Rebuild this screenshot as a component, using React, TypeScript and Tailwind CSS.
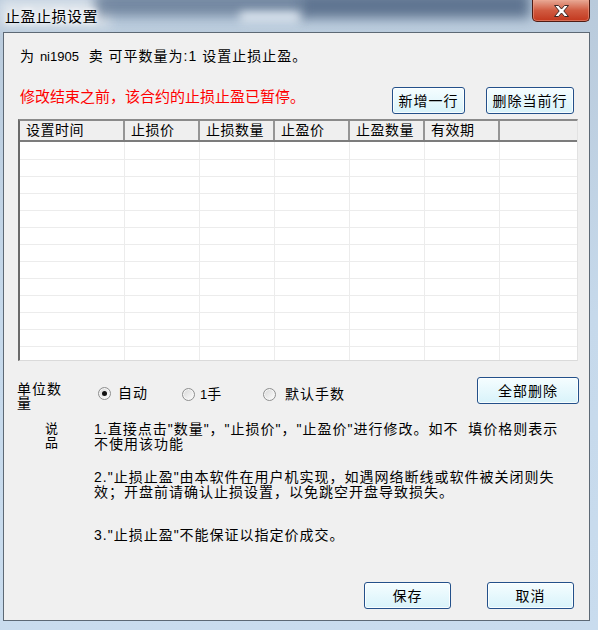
import React from "react";

const cols = [
  { label: "设置时间", w: "w-[105px]", sep: true },
  { label: "止损价", w: "w-[75px]", sep: true },
  { label: "止损数量", w: "w-[75px]", sep: true },
  { label: "止盈价", w: "w-[75px]", sep: true },
  { label: "止盈数量", w: "w-[75px]", sep: true },
  { label: "有效期", w: "w-[75px]", sep: true },
  { label: "", w: "w-[77px]", sep: false },
];

const rows = Array.from({ length: 13 }, (_, i) => i);

function Btn({ label, className = "" }: { label: string; className?: string }) {
  return (
    <button
      className={
        "h-[27px] border border-[#23508a] rounded-[3px] bg-linear-to-b from-[#f5fdff] to-[#d8f3fa] shadow-[inset_0_0_0_1px_#ffffffcc] text-[14px] tracking-[1px] text-black leading-none " +
        className
      }
    >
      {label}
    </button>
  );
}

function Radio({ checked = false }: { checked?: boolean }) {
  return (
    <span className="w-[13px] h-[13px] shrink-0 rounded-full border border-[#8e8f8f] bg-linear-to-br from-[#d6d6d6] to-white shadow-[inset_0_0_0_1px_#f6f6f6] flex items-center justify-center">
      {checked && <span className="w-[5px] h-[5px] rounded-full bg-[#111]" />}
    </span>
  );
}

export default function App() {
  return (
    <div className="relative w-[598px] h-[630px] overflow-hidden bg-linear-to-b from-[#b9cadb] via-[#c6d9eb] to-[#c9dcee] font-['Liberation_Sans','Noto_Sans_CJK_SC',sans-serif] text-black flex flex-col">
      {/* glass blur of the desktop behind the title bar */}
      <div className="absolute left-0 top-0 w-[110px] h-[26px] bg-[#e3e9ef] blur-[6px] opacity-90" />
      <div className="absolute left-[95px] top-[-8px] w-[210px] h-[24px] bg-[#687d98] blur-[6px] opacity-85" />
      <div className="absolute left-[300px] top-[-8px] w-[230px] h-[26px] bg-[#566c89] blur-[6px] opacity-90" />
      <div className="absolute left-[240px] top-[12px] w-[60px] h-[10px] bg-[#dfe8f1] blur-[5px]" />

      {/* title bar */}
      <div className="relative h-[32px] flex items-start justify-between">
        <div className="ml-[5px] mt-[7px] text-[15px] leading-[20px] tracking-[0.5px] [text-shadow:0_0_8px_#ffffff,0_0_4px_#ffffff]">
          止盈止损设置
        </div>
        <div className="mr-[8px] w-[58px] h-[22px] border border-t-0 border-[#4f1c14] rounded-b-[5px] bg-linear-to-b from-[#e6a895] via-[#d05a40] to-[#c2361c] shadow-[inset_0_0_0_1px_#f0a59080] flex items-center justify-center">
          <svg width="17" height="12" viewBox="0 0 17 12">
            <path
              d="M1.5 0.5 H5.5 L8.5 4 L11.5 0.5 H15.5 L10.8 6 L15.5 11.5 H11.5 L8.5 8 L5.5 11.5 H1.5 L6.2 6 Z"
              fill="#ffffff"
              stroke="#3b2724"
              strokeWidth="1"
              strokeLinejoin="round"
            />
          </svg>
        </div>
      </div>

      {/* client area */}
      <div className="relative flex-1 flex pl-[3px] pr-[8px] pb-[9px]">
        <div className="flex-1 border border-[#5d6975] bg-[#f0f0f0] flex flex-col">
          <div className="mt-[13px] ml-[16px] h-[20px] text-[14px] leading-[20px] tracking-[1px] whitespace-pre">
            为 <span className="text-[13px] tracking-[0px]">ni1905</span>  卖 可平数量为:1 设置止损止盈。
          </div>

          <div className="mt-[21px] ml-[16px] h-[27px] flex items-start">
            <div className="mt-[1px] text-[15px] leading-[18px] text-[#ff0000]">修改结束之前，该合约的止损止盈已暂停。</div>
            <div className="ml-auto mr-[15px] flex gap-[21px]">
              <Btn label="新增一行" className="w-[73px]" />
              <Btn label="删除当前行" className="w-[88px]" />
            </div>
          </div>

          {/* grid */}
          <div className="mt-[5px] ml-[14px] w-[560px] h-[242px] border-t-2 border-l-2 border-r border-b border-t-[#8a8a8a] border-l-[#6a6a6a] border-r-[#e2e2e2] border-b-[#dadada] bg-white flex flex-col">
            <div className="flex h-[21px] border-b-2 border-[#7c7c7c] bg-[#efefef]">
              {cols.map((c, i) => (
                <div
                  key={i}
                  className={
                    c.w +
                    " h-[19px] pl-[6px] text-[14px] leading-[19px] tracking-[0.5px] " +
                    (c.sep ? "border-r-2 border-[#959595]" : "")
                  }
                >
                  {c.label}
                </div>
              ))}
            </div>
            <div className="flex flex-1 overflow-hidden">
              {cols.map((c, i) => (
                <div key={i} className={c.w + " pt-[1px] " + (c.sep ? "border-r border-[#ececec]" : "")}>
                  {rows.map((r) => (
                    <div key={r} className="h-[17px] border-b border-[#ececec]" />
                  ))}
                </div>
              ))}
            </div>
          </div>

          {/* unit row */}
          <div className="mt-[16px] h-[27px] flex items-start text-[14px] tracking-[1px]">
            <div className="ml-[13px] mt-[5px] w-[46px] leading-[14px]">单位数量</div>
            <div className="ml-[35px] mt-[8px] w-[84px] h-[16px] flex items-center gap-[7px]">
              <Radio checked />
              <span className="leading-[16px]">自动</span>
            </div>
            <div className="mt-[9px] w-[81px] h-[16px] flex items-center gap-[5px]">
              <Radio />
              <span className="leading-[16px]">
                <span className="text-[13px] tracking-[0px]">1</span>手
              </span>
            </div>
            <div className="mt-[9px] h-[16px] flex items-center gap-[9px]">
              <Radio />
              <span className="leading-[16px]">默认手数</span>
            </div>
            <Btn label="全部删除" className="ml-auto mr-[10px] w-[102px]" />
          </div>

          {/* notes */}
          <div className="mt-[18px] flex items-start text-[14px] tracking-[1px]">
            <div className="ml-[41px] w-[14px] leading-[14px] text-[13px]">
              说<br />品
            </div>
            <div className="ml-[35px] leading-[15px] whitespace-pre">
              <div>
                1.直接点击"数量"，"止损价"，"止盈价"进行修改。如不  填价格则表示
                <br />
                不使用该功能
              </div>
              <div className="mt-[18px]">
                2."止损止盈"由本软件在用户机实现，如遇网络断线或软件被关闭则失
                <br />
                效；开盘前请确认止损设置，以免跳空开盘导致损失。
              </div>
              <div className="mt-[28px]">3."止损止盈"不能保证以指定价成交。</div>
            </div>
          </div>

          <div className="mt-[39px] flex justify-end gap-[36px] mr-[15px]">
            <Btn label="保存" className="w-[87px]" />
            <Btn label="取消" className="w-[87px]" />
          </div>
        </div>
      </div>
    </div>
  );
}
